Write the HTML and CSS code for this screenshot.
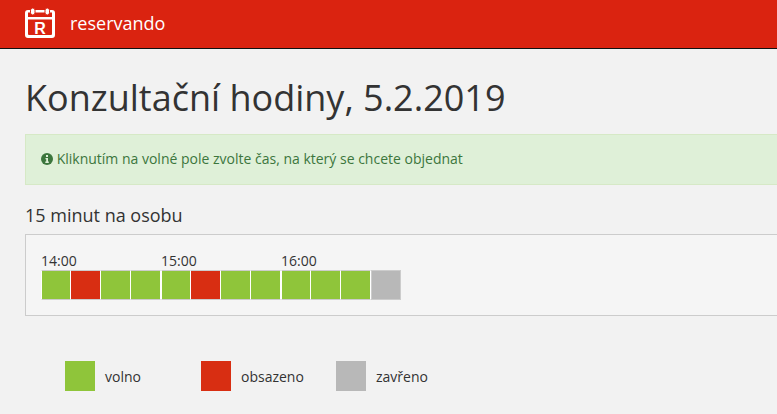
FILE: index.html
```html
<!DOCTYPE html>
<html lang="cs">
<head>
<meta charset="utf-8">
<title>Konzultační hodiny</title>
<link rel="stylesheet" href="styles.css">
</head>
<body>
<header class="topbar">
  <svg class="logo" width="30" height="30" viewBox="0 0 30 30" aria-hidden="true">
    <path fill="#fff" fill-rule="evenodd" d="M3 2h24a3 3 0 0 1 3 3v22a3 3 0 0 1-3 3H3a3 3 0 0 1-3-3V5a3 3 0 0 1 3-3zM3 11.500V26a1 1 0 0 0 1 1h22a1 1 0 0 0 1-1V11.500zM3 4.500V9h24V4.500z"/>
    <rect x="5.500" y="0" width="4.500" height="7" rx="2.200" fill="#fff" stroke="#da2310" stroke-width="1"/>
    <rect x="20" y="0" width="4.500" height="7" rx="2.200" fill="#fff" stroke="#da2310" stroke-width="1"/>
    <text x="15" y="25.500" class="logo-letter" text-anchor="middle">R</text>
  </svg>
  <span class="brand">reservando</span>
</header>
<main class="content">
  <h1 class="title">Konzultační hodiny, 5.2.2019</h1>
  <div class="alert">
    <svg class="info" width="12" height="12" viewBox="0 0 12 12" aria-hidden="true">
      <circle cx="6" cy="6" r="6" fill="#3c763d"/>
      <rect x="5" y="2" width="2" height="2" fill="#dff0d8"/>
      <path d="M4.500 5h2.500v3.500h.8V10H4.300V8.500h.9V6.300h-.7z" fill="#dff0d8"/>
    </svg>
    Kliknutím na volné pole zvolte čas, na který se chcete objednat
  </div>
  <h2 class="subtitle">15 minut na osobu</h2>
  <section class="panel">
    <div class="schedule">
      <div class="hour">
        <div class="hour-label">14:00</div>
        <div class="slots">
          <span class="slot free"></span><span class="slot taken"></span><span class="slot free"></span><span class="slot free"></span>
        </div>
      </div>
      <div class="hour">
        <div class="hour-label">15:00</div>
        <div class="slots">
          <span class="slot free"></span><span class="slot taken"></span><span class="slot free"></span><span class="slot free"></span>
        </div>
      </div>
      <div class="hour">
        <div class="hour-label">16:00</div>
        <div class="slots">
          <span class="slot free"></span><span class="slot free"></span><span class="slot free"></span><span class="slot closed"></span>
        </div>
      </div>
    </div>
  </section>
  <div class="legend">
    <div class="legend-item item-free"><span class="swatch free"></span>volno</div>
    <div class="legend-item item-taken"><span class="swatch taken"></span>obsazeno</div>
    <div class="legend-item"><span class="swatch closed"></span>zavřeno</div>
  </div>
</main>
</body>
</html>
```
FILE: styles.css
```css
* { box-sizing: border-box; }
html, body { margin: 0; height: 100%; overflow: hidden; }
body {
  background: #f2f2f2;
  color: #333;
  font-family: "Open Sans", sans-serif;
  font-size: 14px;
}
.topbar {
  height: 49px;
  background: #da2310;
  border-bottom: 1px solid #111;
  display: flex;
  align-items: center;
  padding-left: 25px;
}
.logo { display: block; margin-right: 15px; margin-top: -2px; }
.logo-letter { font-family: "Liberation Sans", sans-serif; font-size: 16px; font-weight: 700; fill: #fff; }
.brand { color: #fff; font-size: 18px; line-height: 24px; margin-top: -2px; }
.content { padding-left: 25px; }
.title {
  margin: 26px 0 0;
  font-size: 36px;
  font-weight: 400;
  line-height: 46px;
}
.alert {
  margin-top: 13px;
  height: 51px;
  padding: 14px 15px;
  background: #dff0d8;
  border: 1px solid #d6e9c6;
  border-right: 0;
  color: #3c763d;
  font-size: 14px;
  line-height: 20px;
}
.info { vertical-align: -1px; }
.subtitle {
  margin: 19px 0 0;
  font-size: 18px;
  font-weight: 400;
  line-height: 22px;
}
.panel {
  margin-top: 8px;
  height: 82px;
  background: #f5f5f5;
  border: 1px solid #ccc;
  border-right: 0;
  padding: 17px 0 0 15px;
}
.schedule { display: flex; }
.hour { width: 120px; }
.hour-label { font-size: 14px; line-height: 18px; }
.slots { display: flex; }
.slot {
  width: 30px;
  height: 30px;
  border-top: 1px solid #ccc;
  border-bottom: 1px solid #ccc;
  border-right: 1px solid #fff;
}
.slot:first-child { border-left: 1px solid #fff; }
.free { background: #8fc53a; }
.taken { background: #d82e12; }
.closed { background: #b8b8b8; }
.slot.closed { border: 1px solid #ccc; }
.legend {
  display: flex;
  margin: 45px 0 0 40px;
}
.legend-item { display: flex; align-items: center; }
.item-free { width: 136px; }
.item-taken { width: 135px; }
.swatch { width: 30px; height: 30px; margin-right: 10px; }
```
